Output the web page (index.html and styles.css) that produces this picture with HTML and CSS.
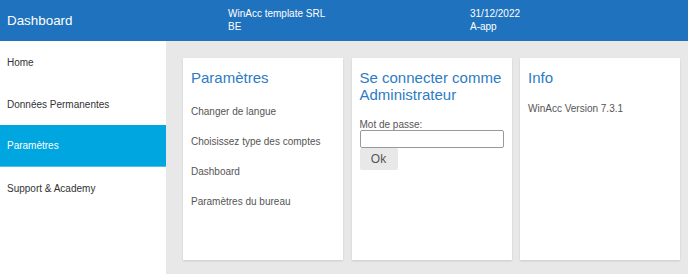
FILE: index.html
```html
<!DOCTYPE html>
<html lang="fr">
<head>
<meta charset="utf-8">
<title>Dashboard</title>
<link rel="stylesheet" href="styles.css">
</head>
<body>
<header class="topbar">
  <div class="brand">Dashboard</div>
  <div class="meta">
    <div>WinAcc template SRL</div>
    <div>BE</div>
  </div>
  <div class="meta">
    <div>31/12/2022</div>
    <div>A-app</div>
  </div>
</header>
<div class="layout">
  <nav class="sidebar">
    <a class="nav-item">Home</a>
    <a class="nav-item">Données Permanentes</a>
    <a class="nav-item active">Paramètres</a>
    <a class="nav-item">Support &amp; Academy</a>
  </nav>
  <main class="content">
    <section class="card">
      <h2 class="card-title">Paramètres</h2>
      <ul class="links">
        <li>Changer de langue</li>
        <li>Choisissez type des comptes</li>
        <li>Dashboard</li>
        <li>Paramètres du bureau</li>
      </ul>
    </section>
    <section class="card">
      <h2 class="card-title">Se connecter comme Administrateur</h2>
      <form class="login">
        <label class="label" for="pw">Mot de passe:</label>
        <input class="input" id="pw" type="password">
        <button class="btn" type="button">Ok</button>
      </form>
    </section>
    <section class="card">
      <h2 class="card-title">Info</h2>
      <p class="info">WinAcc Version 7.3.1</p>
    </section>
  </main>
</div>
</body>
</html>
```

FILE: styles.css
```css
* { box-sizing: border-box; }
html, body { margin: 0; padding: 0; }
body {
  width: 688px;
  height: 274px;
  overflow: hidden;
  font-family: "Liberation Sans", Arial, sans-serif;
  background: #e8e8e8;
  color: #333;
}
.topbar {
  height: 41px;
  background: #1f72bd;
  color: #fff;
  display: flex;
  align-items: center;
}
.brand {
  flex: 0 0 228px;
  padding-left: 7px;
  font-size: 13.4px;
}
.meta {
  flex: 0 0 242px;
  font-size: 10px;
  line-height: 13.5px;
  margin-top: -1px;
}
.layout {
  display: flex;
  height: 233px;
}
.sidebar {
  flex: 0 0 166px;
  background: #fff;
  display: flex;
  flex-direction: column;
}
.nav-item {
  height: 42px;
  display: flex;
  align-items: center;
  padding-left: 7px;
  font-size: 10px;
  color: #333;
}
.nav-item.active {
  background: #00a6e0;
  color: #fff;
  border-bottom: 1px solid #4fc0ea;
}
.content {
  flex: 1;
  display: flex;
  gap: 8.5px;
  padding: 17px 0 0 17px;
}
.card {
  flex: 0 0 160px;
  height: 202px;
  background: #fff;
  box-shadow: 0 1px 2px rgba(0,0,0,0.12);
  padding: 12px 8px 0 8px;
}
.card-title {
  margin: 0;
  font-weight: normal;
  font-size: 15px;
  line-height: 16.5px;
  color: #2d7bc4;
}
.links {
  list-style: none;
  margin: 19px 0 0;
  padding: 0;
}
.links li {
  font-size: 10px;
  line-height: 12px;
  height: 30px;
  color: #555;
}
.login {
  display: flex;
  flex-direction: column;
  align-items: flex-start;
  margin-top: 16px;
}
.label {
  font-size: 10px;
  line-height: 11px;
  color: #555;
}
.input {
  width: 144px;
  height: 18px;
  margin: 0;
  border: 1px solid #999;
  border-radius: 2px;
  padding: 0 3px;
  background: #fff;
}
.btn {
  width: 38px;
  height: 22px;
  margin: 0;
  border: none;
  border-radius: 2px;
  background: #e8e8e8;
  color: #555;
  font-family: "Liberation Sans", Arial, sans-serif;
  font-size: 12px;
  padding: 0;
}
.info {
  margin: 16px 0 0;
  font-size: 10px;
  line-height: 12px;
  color: #555;
}
```
